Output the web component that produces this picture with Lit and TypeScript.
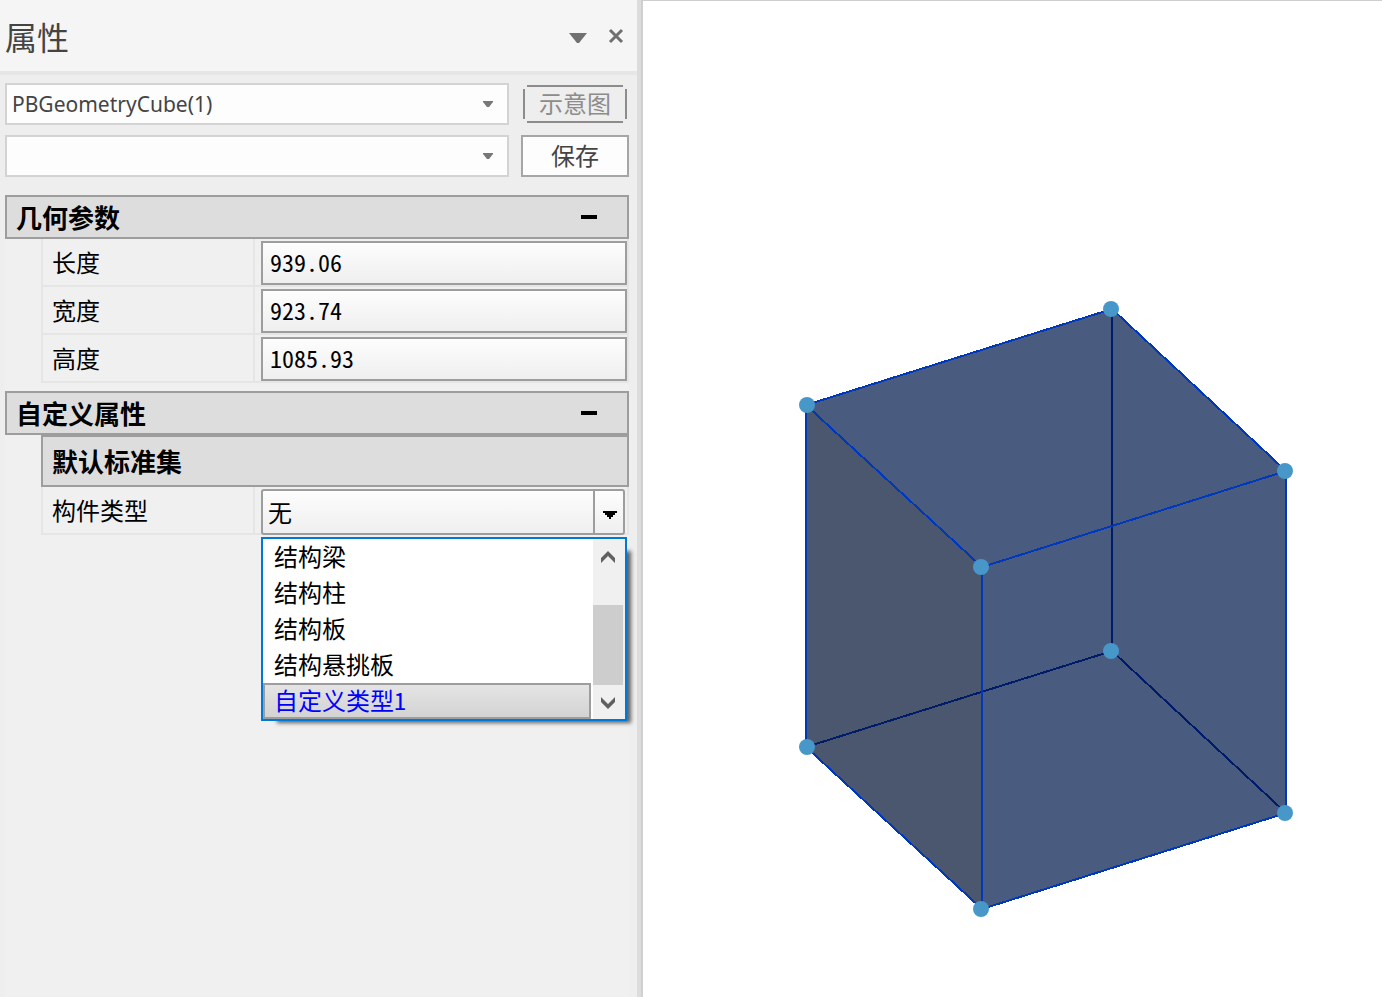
import { LitElement, html, svg, css } from "lit";
import { customElement, property, state } from "lit/decorators.js";
import { classMap } from "lit/directives/class-map.js";

const FONT = css`"Noto Sans CJK SC", "Noto Sans", sans-serif`;

@customElement("combo-field")
class ComboField extends LitElement {
  @property() label = "";
  @property({ type: Array }) options: string[] = [];

  static styles = css`
    :host {
      display: grid;
      align-items: center;
      height: 42px;
    }
    .box {
      grid-area: 1 / 1;
      appearance: none;
      box-sizing: border-box;
      width: 100%;
      height: 100%;
      margin: 0;
      padding: 0 36px 0 5px;
      border: 2px solid #d3d3d3;
      border-radius: 0;
      background: #fdfdfd;
      color: #444;
      font: 21px/32px "Noto Sans", sans-serif;
    }
    .arrow {
      grid-area: 1 / 1;
      justify-self: end;
      margin-right: 16px;
      pointer-events: none;
    }
  `;

  render() {
    return html`
      <select class="box" aria-label=${this.label}>
        ${this.options.map((o) => html`<option>${o}</option>`)}
      </select>
      <svg class="arrow" width="10" height="6" viewBox="0 0 10 6" aria-hidden="true">
        <path d="M0 0h10v1L6 6H4L0 1z" fill="#777" />
      </svg>
    `;
  }
}

@customElement("type-picker")
class TypePicker extends LitElement {
  @property({ type: Array }) types: string[] = [];
  @state() private active = 4;

  static styles = css`
    :host {
      display: block;
      position: relative;
      font-family: ${FONT};
      font-size: 24px;
    }
    .field {
      display: grid;
      height: 46px;
      margin-right: 2px;
    }
    .current {
      grid-area: 1 / 1;
      appearance: none;
      box-sizing: border-box;
      width: 100%;
      height: 46px;
      margin: 0;
      padding: 0 36px 0 5px;
      border: 2px solid #9d9d9d;
      border-radius: 3px;
      background: linear-gradient(#fdfdfd, #efefef);
      color: #000;
      font: inherit;
      line-height: 36px;
    }
    .drop {
      grid-area: 1 / 1;
      justify-self: end;
      display: grid;
      place-items: center;
      box-sizing: border-box;
      width: 32px;
      padding-top: 6px;
      border-left: 2px solid #9d9d9d;
      pointer-events: none;
    }
    .popup {
      position: absolute;
      top: 48px;
      left: 0;
      right: 0;
      display: grid;
      grid-template-columns: 1fr 32px;
      border: 2px solid #0078d7;
      background: #fff;
      box-shadow: 10px 8px 4px -6px rgba(0, 0, 0, 0.6);
    }
    .list {
      margin: 0;
      padding: 0 2px 0 0;
      list-style: none;
    }
    .item {
      box-sizing: border-box;
      height: 36px;
      padding: 0 9px;
      border: 2px solid transparent;
      line-height: 30px;
      font-feature-settings: "hwid";
    }
    .item.on {
      border-color: #9d9d9d;
      background: linear-gradient(#e4e4e4, #d3d3d3);
      color: #00f;
    }
    .bar {
      display: grid;
      grid-template-rows: 66px 1fr 34px;
      background: #f0f0f0;
    }
    .step {
      display: grid;
      justify-content: center;
      align-content: start;
      padding: 12px 2px 0 0;
      border: 0;
      background: none;
    }
    .thumb {
      margin-right: 2px;
      background: #cdcdcd;
    }
  `;

  render() {
    return html`
      <div class="field">
        <select class="current" aria-label="构件类型"><option>无</option></select>
        <span class="drop">
          <svg width="14" height="8" viewBox="0 0 14 8" shape-rendering="crispEdges" aria-hidden="true">
            <path d="M0 0h14v2h-2v2h-2v2H8v2H6V6H4V4H2V2H0z" />
          </svg>
        </span>
      </div>
      <div class="popup">
        <ul class="list" role="listbox" aria-label="构件类型">
          ${this.types.map(
            (t, i) => html`<li
              class=${classMap({ item: true, on: i === this.active })}
              role="option"
              aria-selected=${i === this.active}
              @click=${() => (this.active = i)}
            >${t}</li>`
          )}
        </ul>
        <div class="bar">
          <button class="step" aria-label="向上滚动">
            <svg width="14" height="12" viewBox="0 0 14 12">
              <path d="M0 12V7l7-7 7 7v5L7 5z" fill="#606060" />
            </svg>
          </button>
          <div class="thumb"></div>
          <button class="step" aria-label="向下滚动">
            <svg width="14" height="12" viewBox="0 0 14 12">
              <path d="M0 0v5l7 7 7-7V0L7 7z" fill="#606060" />
            </svg>
          </button>
        </div>
      </div>
    `;
  }
}

@customElement("property-panel")
class PropertyPanel extends LitElement {
  private geometry = [
    { id: "length", name: "长度", value: "939.06" },
    { id: "width", name: "宽度", value: "923.74" },
    { id: "height", name: "高度", value: "1085.93" },
  ];
  private types = ["结构梁", "结构柱", "结构板", "结构悬挑板", "自定义类型1"];

  static styles = css`
    :host {
      display: flex;
      flex-direction: column;
      background: #eee;
      color: #000;
      font-family: ${FONT};
      font-size: 24px;
    }
    .head {
      display: flex;
      align-items: center;
      gap: 21px;
      height: 71px;
      padding: 0 13px 0 5px;
      border-bottom: 4px solid #e6e6e6;
      background: #f5f5f5;
    }
    .title {
      flex: 1;
      margin: 0;
      color: #444;
      font-size: 32px;
      font-weight: 400;
      line-height: 40px;
    }
    .tool {
      display: grid;
      padding: 0;
      border: 0;
      background: none;
    }
    .body {
      display: flex;
      flex: 1;
      flex-direction: column;
      padding: 8px 8px 0 5px;
    }
    .pick {
      display: grid;
      grid-template-columns: 1fr 108px;
      gap: 10px 12px;
      margin-bottom: 18px;
    }
    .btn {
      box-sizing: border-box;
      padding: 0 0 2px;
      border: 2px solid #a6a6a6;
      background: #fdfdfd;
      color: #444;
      font: inherit;
      line-height: 34px;
    }
    .btn.ghost {
      --line: linear-gradient(#8c8c8c, #8c8c8c);
      margin: 2px;
      border: 0;
      background:
        var(--line) center top / calc(100% - 8px) 2px no-repeat,
        var(--line) center bottom / calc(100% - 8px) 2px no-repeat,
        var(--line) left center / 2px calc(100% - 8px) no-repeat,
        var(--line) right center / 2px calc(100% - 8px) no-repeat;
      color: #8c8c8c;
    }
    .section {
      display: flex;
      align-items: center;
      box-sizing: border-box;
      height: 44px;
      margin: 0;
      padding: 0 30px 0 9px;
      border: 2px solid #9d9d9d;
      background: #ddd;
      font-size: 26px;
      font-weight: 700;
      line-height: 36px;
    }
    .section span {
      flex: 1;
    }
    .fold {
      width: 16px;
      height: 4px;
      padding: 0;
      border: 0;
      background: #000;
    }
    .rows {
      padding: 0 0 8px 36px;
      background: #f0f0f0;
    }
    .rows:last-child {
      flex: 1;
    }
    .sub {
      height: 52px;
    }
    .row {
      display: grid;
      grid-template-columns: 212px 1fr;
      column-gap: 6px;
      box-sizing: border-box;
      height: 48px;
      border: 2px solid #e5e5e5;
      border-top: 0;
    }
    .name {
      padding-left: 9px;
      border-right: 2px solid #e5e5e5;
      line-height: 46px;
    }
    .value {
      box-sizing: border-box;
      width: 100%;
      height: 44px;
      margin: 2px 0 0;
      padding: 0 7px 4px;
      border: 2px solid #9d9d9d;
      border-radius: 0;
      background: linear-gradient(#fdfdfd, #efefef);
      color: #000;
      font: inherit;
      font-feature-settings: "hwid";
    }
    .picker {
      margin-top: 2px;
    }
  `;

  render() {
    return html`
      <header class="head">
        <h1 class="title">属性</h1>
        <button class="tool" aria-label="选项">
          <svg width="18" height="14" viewBox="0 0 18 14"><path d="M0 4h18l-8 10H8z" fill="#707070" /></svg>
        </button>
        <button class="tool" aria-label="关闭">
          <svg width="16" height="16" viewBox="0 0 16 16">
            <path d="M2 2l12 12M14 2L2 14" stroke="#707070" stroke-width="3" />
          </svg>
        </button>
      </header>
      <div class="body">
        <div class="pick">
          <combo-field label="对象" .options=${["PBGeometryCube(1)"]}></combo-field>
          <button class="btn ghost" disabled>示意图</button>
          <combo-field label="方案" .options=${[""]}></combo-field>
          <button class="btn">保存</button>
        </div>
        <h2 class="section"><span>几何参数</span><button class="fold" aria-label="折叠"></button></h2>
        <div class="rows">
          ${this.geometry.map(
            (g) => html`<div class="row">
              <label class="name" for=${g.id}>${g.name}</label>
              <input class="value" id=${g.id} .value=${g.value} />
            </div>`
          )}
        </div>
        <h2 class="section"><span>自定义属性</span><button class="fold" aria-label="折叠"></button></h2>
        <div class="rows">
          <h3 class="section sub">默认标准集</h3>
          <div class="row">
            <span class="name">构件类型</span>
            <type-picker class="picker" .types=${this.types}></type-picker>
          </div>
        </div>
      </div>
    `;
  }
}

@customElement("cube-view")
class CubeView extends LitElement {
  private nodes = [
    [1111, 309], [807, 405], [981, 567], [1285, 471],
    [1111, 651], [807, 747], [981, 909], [1285, 813],
  ];

  static styles = css`
    :host {
      display: grid;
      min-height: 0;
      border-top: 1px solid #cfcfcf;
      background: #fff;
    }
    .scene {
      width: 100%;
      height: 100%;
      min-height: 0;
    }
    .edges {
      fill: none;
      stroke: #0038bc;
      stroke-width: 2;
      shape-rendering: crispEdges;
    }
    .hidden {
      stroke: #001c68;
    }
    .node {
      fill: #4897c9;
    }
  `;

  render() {
    return html`
      <svg class="scene" viewBox="643 1 739 996" role="img" aria-label="立方体">
        <path d="M1112 309L806 405V747L982 909L1286 813V471z" fill="#4a5b80" />
        <path d="M806 405L982 567V909L806 747z" fill="#4b566f" />
        <path class="edges hidden" d="M1112 309V651M806 747L1112 651L1286 813" />
        <path class="edges" d="M1112 309L806 405V747L982 909L1286 813V471zM806 405L982 567V909M982 567L1286 471" />
        ${this.nodes.map(([x, y]) => svg`<circle class="node" cx=${x} cy=${y} r="8" />`)}
      </svg>
    `;
  }
}

@customElement("app-root")
class AppRoot extends LitElement {
  static styles = css`
    :host {
      display: grid;
      grid-template-columns: minmax(0, 637fr) 6px minmax(0, 739fr);
      height: 100vh;
      overflow: hidden;
    }
    .splitter {
      box-sizing: border-box;
      border-right: 2px solid #d0d0d0;
      background: #dcdcdc;
    }
  `;

  render() {
    return html`
      <property-panel></property-panel>
      <div class="splitter" role="separator"></div>
      <cube-view></cube-view>
    `;
  }
}
